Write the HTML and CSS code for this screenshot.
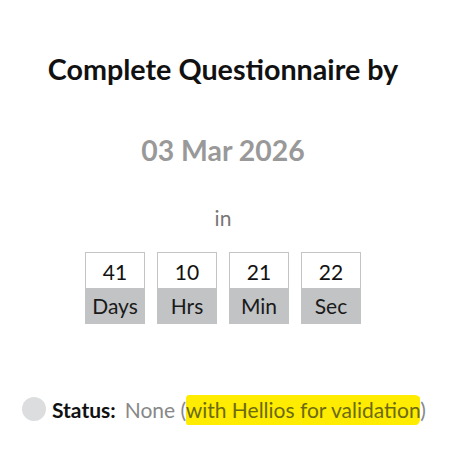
FILE: index.html
```html
<!DOCTYPE html>
<html>
<head>
<meta charset="utf-8">
<link rel="stylesheet" href="styles.css">
</head>
<body>
<div class="card">
  <h1 class="title">Complete Questionnaire by</h1>
  <div class="date">03 Mar 2026</div>
  <div class="in">in</div>
  <div class="timer">
    <div class="unit"><div class="num">41</div><div class="lbl">Days</div></div>
    <div class="unit"><div class="num">10</div><div class="lbl">Hrs</div></div>
    <div class="unit"><div class="num">21</div><div class="lbl">Min</div></div>
    <div class="unit"><div class="num">22</div><div class="lbl">Sec</div></div>
  </div>
  <div class="status">
    <span class="dot"></span>
    <span class="key">Status:</span>
    <span class="val">None (<span class="hl">with Hellios for validation</span>)</span>
  </div>
</div>
</body>
</html>
```
FILE: styles.css
```css
html, body {
  margin: 0;
  padding: 0;
  background: #fff;
}
body {
  font-family: Lato, "Open Sans", sans-serif;
  width: 460px;
  height: 453px;
  overflow: hidden;
}
.card {
  width: 446px;
  display: flex;
  flex-direction: column;
  align-items: center;
  padding-top: 50px;
}
.title {
  margin: 0;
  font-size: 28.7px;
  font-weight: 700;
  color: #111;
  line-height: 38px;
}
.date {
  margin-top: 43px;
  font-size: 28.4px;
  font-weight: 700;
  color: #999;
  line-height: 38px;
}
.in {
  margin-top: 35px;
  font-size: 21px;
  color: #777;
  line-height: 28px;
}
.timer {
  margin-top: 20px;
  display: flex;
  gap: 12px;
}
.unit {
  width: 60px;
  display: flex;
  flex-direction: column;
}
.num {
  height: 35px;
  border: 1px solid #c4c4c4;
  border-bottom: none;
  background: #fff;
  font-size: 21px;
  color: #111;
  text-align: center;
  line-height: 37px;
}
.lbl {
  height: 36px;
  background: #c2c3c5;
  font-size: 21px;
  color: #1a1a1a;
  text-align: center;
  line-height: 36px;
}
.status {
  align-self: flex-start;
  margin-top: 72px;
  margin-left: 22px;
  display: flex;
  align-items: center;
  font-size: 21px;
  line-height: 28px;
}
.dot {
  width: 24px;
  height: 24px;
  border-radius: 50%;
  background: #dcdddf;
  margin-right: 6px;
  margin-top: -3px;
}
.key {
  font-weight: 700;
  color: #111;
  margin-right: 9px;
}
.val {
  color: #888;
}
.hl {
  background: #ffec00;
  color: #6b6a12;
  padding: 2px 0 3px;
  border-radius: 3px 6px 4px 2px / 4px 3px 6px 3px;
}
```
